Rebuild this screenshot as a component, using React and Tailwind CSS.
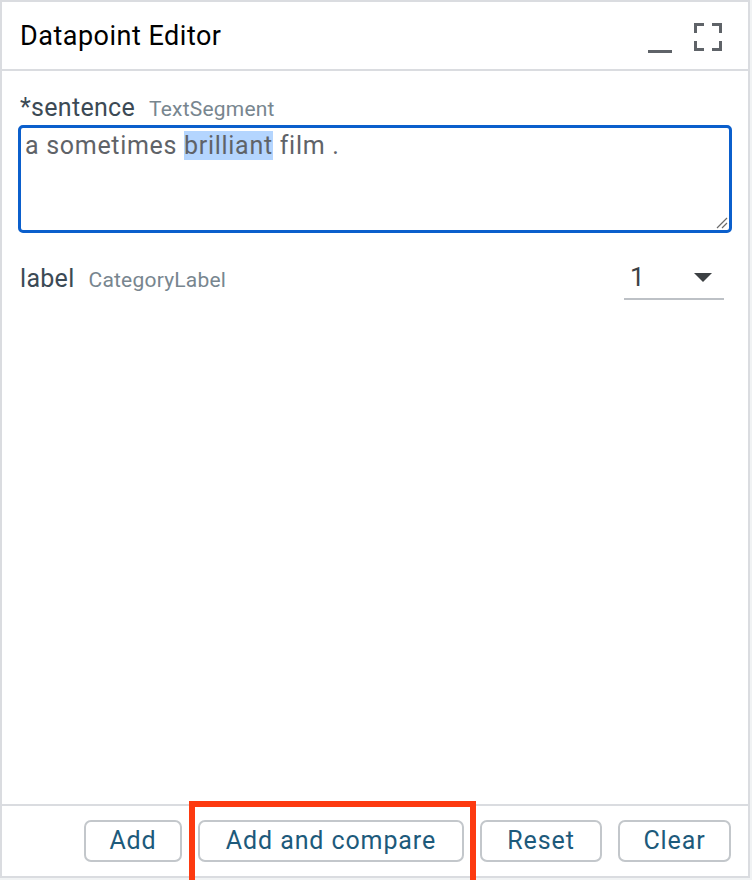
import React from 'react'

const font = { fontFamily: 'Roboto, "Noto Sans", sans-serif' }

function MinimizeIcon() {
  return (
    <svg width="24" height="32" viewBox="0 0 24 32" className="shrink-0">
      <rect x="0" y="29" width="24" height="3" fill="#5f6368" />
    </svg>
  )
}

function FullscreenIcon() {
  return (
    <svg width="28" height="28" viewBox="0 0 28 28" className="shrink-0">
      <path d="M0 0h10v3H3v7H0z M18 0h10v10h-3V3h-7z M0 18h3v7h7v3H0z M25 18h3v10H18v-3h7z" fill="#5f6368" />
    </svg>
  )
}

function ResizeGrip() {
  return (
    <svg width="14" height="14" viewBox="0 0 14 14" className="absolute right-[1px] bottom-[1px]">
      <path d="M13 3L3 13 M13 8L8 13" stroke="#6b6b6b" strokeWidth="1.2" />
    </svg>
  )
}

function FieldLabel({ name, type }) {
  return (
    <div className="flex items-baseline gap-[14px]">
      <span className="text-[25px] tracking-[0.3px] text-[#3c4a55] leading-none">{name}</span>
      <span className="text-[21px] tracking-[0.2px] text-[#78868f] leading-none">{type}</span>
    </div>
  )
}

function Button({ children, width }) {
  return (
    <button className={`h-[42px] ${width} rounded-[7px] border-2 border-[#c3c7cb] bg-white text-[25px] tracking-[0.9px] text-[#1d5a7b] flex items-center justify-center`}>
      {children}
    </button>
  )
}

export default function App() {
  return (
    <div className="relative w-[752px] h-[880px] bg-[#f1f3f4] overflow-hidden" style={font}>
      <div className="w-[750px] h-[878px] border-2 border-[#dadce0] bg-white flex flex-col">
        {/* header */}
        <div className="h-[69px] shrink-0 flex items-center border-b-2 border-[#dadce0] pl-[18px] pr-[26px]">
          <h1 className="text-[27px] tracking-[0.5px] text-black leading-none mt-[2px]">Datapoint Editor</h1>
          <div className="ml-auto flex items-center gap-[22px] mt-[2px]">
            <MinimizeIcon />
            <FullscreenIcon />
          </div>
        </div>

        {/* fields */}
        <div className="flex-1 px-[16px] pt-[24px]">
          <div className="pl-[2px]">
            <FieldLabel name="*sentence" type="TextSegment" />
          </div>
          <div className="relative mt-[5px] h-[108px] rounded-[5px] border-[3px] border-[#0b5fcc] px-[4px]">
            <p className="text-[25px] tracking-[0.7px] text-[#5f6368] leading-[35px]">
              a sometimes <span className="bg-[#b4d5fe]">brilliant</span> film .
            </p>
            <ResizeGrip />
          </div>

          <div className="mt-[23px] flex items-center pl-[2px]">
            <FieldLabel name="label" type="CategoryLabel" />
            <div className="ml-auto mr-[8px] w-[100px] h-[44px] border-b-2 border-[#bdc1c6] flex items-center pl-[6px] pr-[12px]">
              <span className="text-[26px] text-[#3c4043] leading-none">1</span>
              <svg width="18" height="9" viewBox="0 0 18 9" className="ml-auto">
                <path d="M0 0h18L9 9z" fill="#3c4043" />
              </svg>
            </div>
          </div>
        </div>

        {/* footer */}
        <div className="h-[72px] shrink-0 border-t-2 border-[#dadce0] flex items-center justify-end gap-[16px] pr-[17px]">
          <Button width="w-[98px]">Add</Button>
          <Button width="w-[266px]">Add and compare</Button>
          <Button width="w-[122px]">Reset</Button>
          <Button width="w-[113px]">Clear</Button>
        </div>
      </div>

      {/* annotation highlight */}
      <div className="absolute left-[189px] top-[801px] w-[287px] h-[100px] border-[6px] border-[#fd3a10] pointer-events-none" />
    </div>
  )
}
